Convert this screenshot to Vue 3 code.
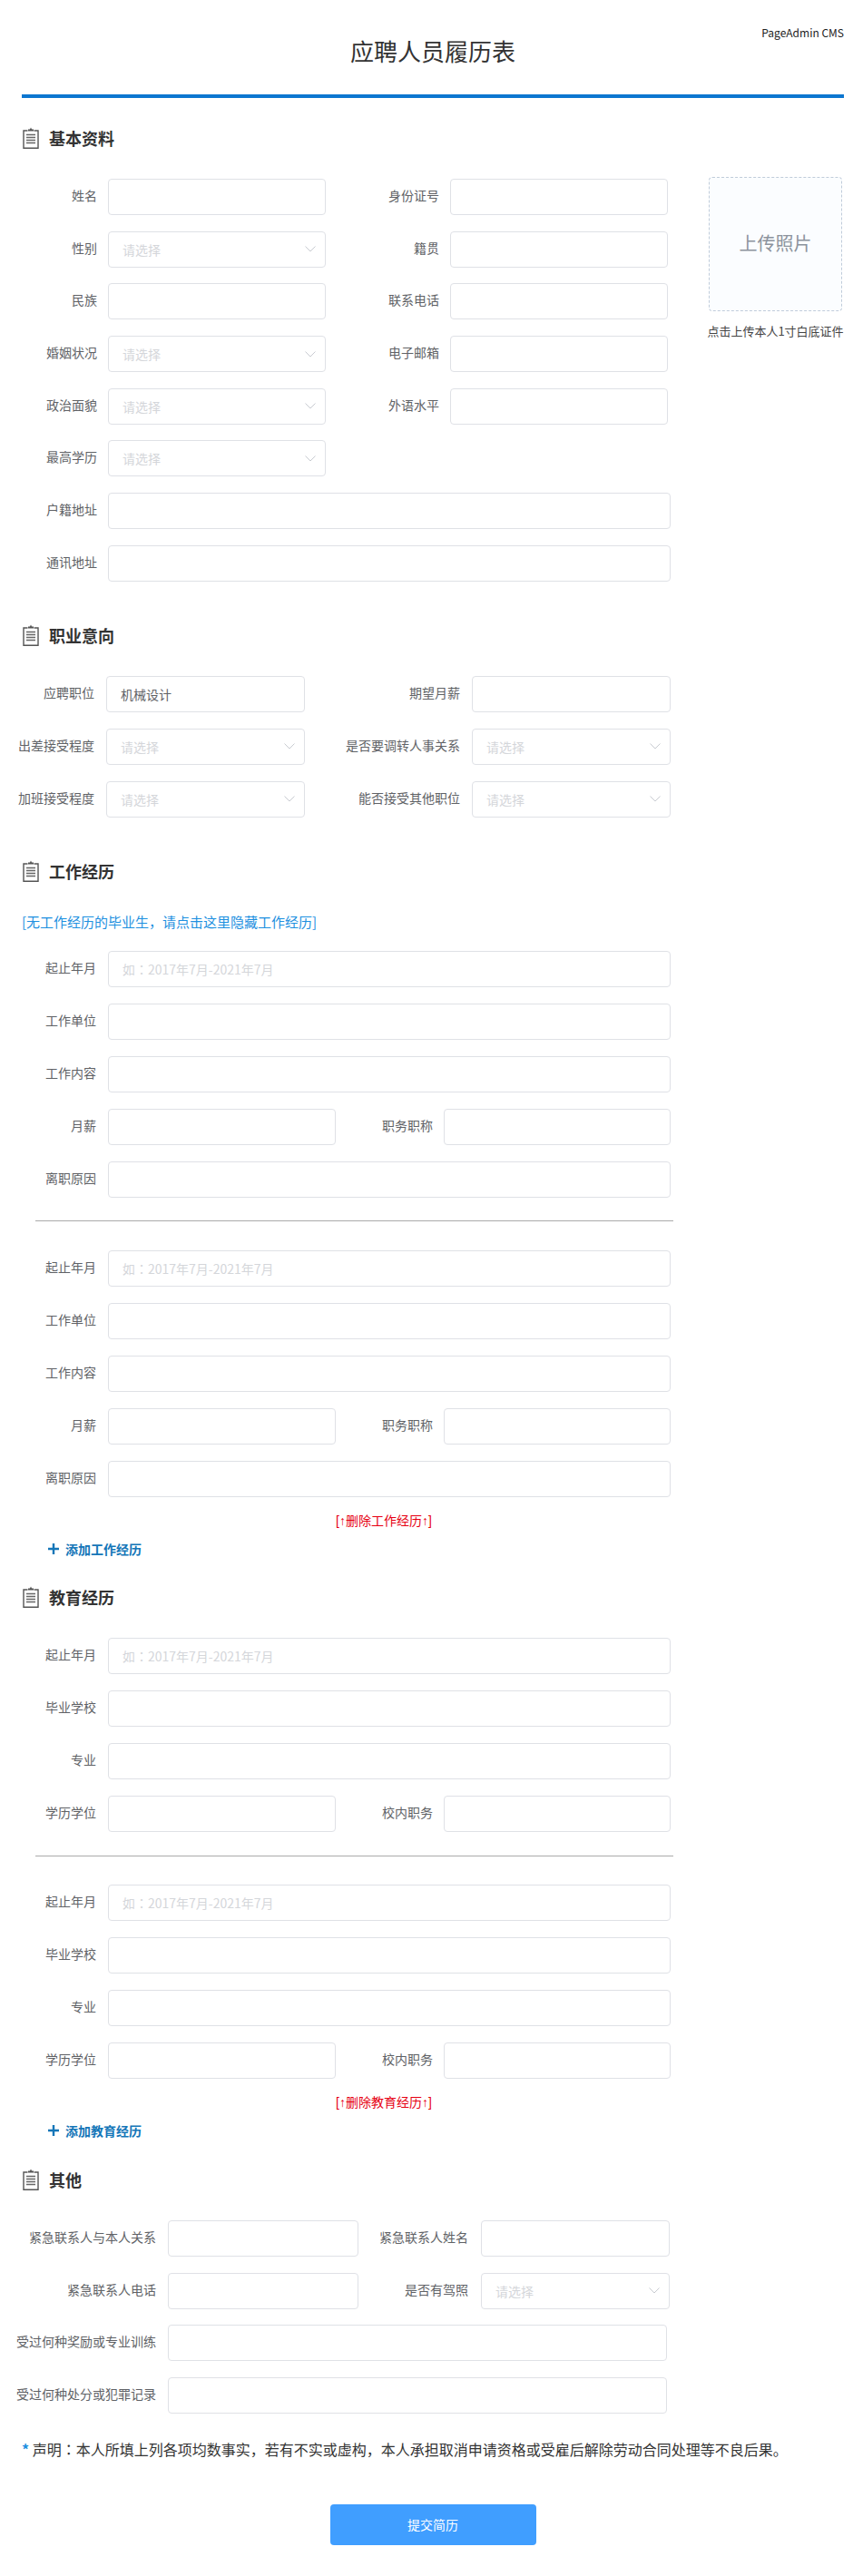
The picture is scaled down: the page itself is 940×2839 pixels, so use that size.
<script setup>
const sel = (l) => ({ l, select: true })
const inp = (l, extra = {}) => ({ l, ...extra })
const full = (l, extra = {}) => ({ l, full: true, ...extra })

const basicRows = [
  [inp('姓名'), inp('身份证号')],
  [sel('性别'), inp('籍贯')],
  [inp('民族'), inp('联系电话')],
  [sel('婚姻状况'), inp('电子邮箱')],
  [sel('政治面貌'), inp('外语水平')],
  [sel('最高学历')],
  [full('户籍地址')],
  [full('通讯地址')]
]
const jobRows = [
  [inp('应聘职位', { value: '机械设计' }), inp('期望月薪')],
  [sel('出差接受程度'), sel('是否要调转人事关系')],
  [sel('加班接受程度'), sel('能否接受其他职位')]
]
const dateHint = '如：2017年7月-2021年7月'
const workRows = [
  [full('起止年月', { ph: dateHint })],
  [full('工作单位')],
  [full('工作内容')],
  [inp('月薪'), inp('职务职称')],
  [full('离职原因')]
]
const eduRows = [
  [full('起止年月', { ph: dateHint })],
  [full('毕业学校')],
  [full('专业')],
  [inp('学历学位'), inp('校内职务')]
]
const otherRows = [
  [inp('紧急联系人与本人关系'), inp('紧急联系人姓名')],
  [inp('紧急联系人电话'), sel('是否有驾照')],
  [full('受过何种奖励或专业训练')],
  [full('受过何种处分或犯罪记录')]
]
</script>

<template>
  <div class="page">
    <header class="head">
      <span></span>
      <h1 class="title">应聘人员履历表</h1>
      <span class="brand">PageAdmin CMS</span>
    </header>

    <section class="sec first-sec">
      <h2 class="sec-title">
        <svg class="clip" viewBox="0 0 18 24" width="18" height="24" fill="none">
          <path d="M5.5 4H1v19.2h16V4h-4.5" stroke="#555" stroke-width="1.4" />
          <path d="M6 4.6V2.6h2L9 .6l1 2h2v2z" fill="#555" />
          <path d="M4 8.5h10M4 11.5h10M4 14.5h10M4 17.5h10" stroke="#666" stroke-width="1.4" />
        </svg>基本资料
      </h2>
      <div class="basic-wrap">
        <div class="rows basic">
          <div v-for="(row, r) in basicRows" :key="r" class="row">
            <div v-for="(f, i) in row" :key="f.l" class="field" :class="[i ? 'second' : 'first', { full: f.full }]">
              <label class="label">{{ f.l }}</label>
              <div v-if="f.select" class="control select">
                <span>请选择</span>
                <svg width="12" height="7" viewBox="0 0 12 7" fill="none"><path d="M.5.5 6 6 11.5.5" stroke="#c8cbd1" /></svg>
              </div>
              <input v-else class="control" type="text" :value="f.value" :placeholder="f.ph" />
            </div>
          </div>
        </div>
        <aside class="photo-box">
          <div class="photo">上传照片</div>
          <p class="photo-tip">点击上传本人1寸白底证件</p>
        </aside>
      </div>
    </section>

    <section class="sec">
      <h2 class="sec-title">
        <svg class="clip" viewBox="0 0 18 24" width="18" height="24" fill="none">
          <path d="M5.5 4H1v19.2h16V4h-4.5" stroke="#555" stroke-width="1.4" />
          <path d="M6 4.6V2.6h2L9 .6l1 2h2v2z" fill="#555" />
          <path d="M4 8.5h10M4 11.5h10M4 14.5h10M4 17.5h10" stroke="#666" stroke-width="1.4" />
        </svg>职业意向
      </h2>
      <div class="rows job">
        <div v-for="(row, r) in jobRows" :key="r" class="row">
          <div v-for="(f, i) in row" :key="f.l" class="field" :class="[i ? 'second' : 'first']">
            <label class="label">{{ f.l }}</label>
            <div v-if="f.select" class="control select">
              <span>请选择</span>
              <svg width="12" height="7" viewBox="0 0 12 7" fill="none"><path d="M.5.5 6 6 11.5.5" stroke="#c8cbd1" /></svg>
            </div>
            <input v-else class="control" type="text" :value="f.value" />
          </div>
        </div>
      </div>
    </section>

    <section class="sec">
      <h2 class="sec-title">
        <svg class="clip" viewBox="0 0 18 24" width="18" height="24" fill="none">
          <path d="M5.5 4H1v19.2h16V4h-4.5" stroke="#555" stroke-width="1.4" />
          <path d="M6 4.6V2.6h2L9 .6l1 2h2v2z" fill="#555" />
          <path d="M4 8.5h10M4 11.5h10M4 14.5h10M4 17.5h10" stroke="#666" stroke-width="1.4" />
        </svg>工作经历
      </h2>
      <p class="hide-link">[无工作经历的毕业生，请点击这里隐藏工作经历]</p>
      <div class="rows work">
        <div v-for="(row, r) in workRows" :key="r" class="row">
          <div v-for="(f, i) in row" :key="f.l" class="field" :class="[i ? 'second' : 'first', { full: f.full }]">
            <label class="label">{{ f.l }}</label>
            <input class="control" type="text" :placeholder="f.ph" />
          </div>
        </div>
      </div>
      <hr class="divider work-div" />
      <div class="rows work">
        <div v-for="(row, r) in workRows" :key="r" class="row">
          <div v-for="(f, i) in row" :key="f.l" class="field" :class="[i ? 'second' : 'first', { full: f.full }]">
            <label class="label">{{ f.l }}</label>
            <input class="control" type="text" :placeholder="f.ph" />
          </div>
        </div>
      </div>
      <p class="del-link">[↑删除工作经历↑]</p>
      <p class="add-link">
        <svg width="12" height="12" viewBox="0 0 12 12"><path d="M6 0v12M0 6h12" stroke="#1476b8" stroke-width="2.4" /></svg>添加工作经历
      </p>
    </section>

    <section class="sec tight">
      <h2 class="sec-title">
        <svg class="clip" viewBox="0 0 18 24" width="18" height="24" fill="none">
          <path d="M5.5 4H1v19.2h16V4h-4.5" stroke="#555" stroke-width="1.4" />
          <path d="M6 4.6V2.6h2L9 .6l1 2h2v2z" fill="#555" />
          <path d="M4 8.5h10M4 11.5h10M4 14.5h10M4 17.5h10" stroke="#666" stroke-width="1.4" />
        </svg>教育经历
      </h2>
      <div class="rows work">
        <div v-for="(row, r) in eduRows" :key="r" class="row">
          <div v-for="(f, i) in row" :key="f.l" class="field" :class="[i ? 'second' : 'first', { full: f.full }]">
            <label class="label">{{ f.l }}</label>
            <input class="control" type="text" :placeholder="f.ph" />
          </div>
        </div>
      </div>
      <hr class="divider edu-div" />
      <div class="rows work">
        <div v-for="(row, r) in eduRows" :key="r" class="row">
          <div v-for="(f, i) in row" :key="f.l" class="field" :class="[i ? 'second' : 'first', { full: f.full }]">
            <label class="label">{{ f.l }}</label>
            <input class="control" type="text" :placeholder="f.ph" />
          </div>
        </div>
      </div>
      <p class="del-link">[↑删除教育经历↑]</p>
      <p class="add-link">
        <svg width="12" height="12" viewBox="0 0 12 12"><path d="M6 0v12M0 6h12" stroke="#1476b8" stroke-width="2.4" /></svg>添加教育经历
      </p>
    </section>

    <section class="sec last-sec">
      <h2 class="sec-title">
        <svg class="clip" viewBox="0 0 18 24" width="18" height="24" fill="none">
          <path d="M5.5 4H1v19.2h16V4h-4.5" stroke="#555" stroke-width="1.4" />
          <path d="M6 4.6V2.6h2L9 .6l1 2h2v2z" fill="#555" />
          <path d="M4 8.5h10M4 11.5h10M4 14.5h10M4 17.5h10" stroke="#666" stroke-width="1.4" />
        </svg>其他
      </h2>
      <div class="rows other">
        <div v-for="(row, r) in otherRows" :key="r" class="row">
          <div v-for="(f, i) in row" :key="f.l" class="field" :class="[i ? 'second' : 'first', { full: f.full }]">
            <label class="label">{{ f.l }}</label>
            <div v-if="f.select" class="control select">
              <span>请选择</span>
              <svg width="12" height="7" viewBox="0 0 12 7" fill="none"><path d="M.5.5 6 6 11.5.5" stroke="#c8cbd1" /></svg>
            </div>
            <input v-else class="control" type="text" />
          </div>
        </div>
      </div>
    </section>

    <p class="statement"><span class="star">*</span> 声明<span class="tc">：</span>本人所填上列各项均数事实，若有不实或虚构，本人承担取消申请资格或受雇后解除劳动合同处理等不良后果。</p>

    <div class="actions">
      <button class="submit" type="button">提交简历</button>
    </div>
  </div>
</template>

<style>
html, body { margin: 0; background: #fff; }
</style>

<style scoped>
.page {
  box-sizing: border-box;
  width: 940px;
  height: 2839px;
  padding: 0 10px 0 24px;
  font-family: "Noto Sans CJK SC", "Noto Sans", sans-serif;
  font-size: 14px;
  color: #606266;
  overflow: hidden;
}
.head {
  display: grid;
  grid-template-columns: 1fr auto 1fr;
  height: 104px;
  border-bottom: 4px solid #0c76d0;
}
.title {
  margin: 36px 0 0;
  font-size: 26px;
  line-height: 40px;
  font-weight: 400;
  color: #333;
}
.brand {
  justify-self: end;
  margin-top: 27px;
  font-size: 12px;
  line-height: 18px;
  color: #222;
}
.sec { margin-top: 47px; }
.first-sec { margin-top: 32px; }
.sec.tight { margin-top: 30px; }
.sec.last-sec { margin-top: 31px; }
.sec-title {
  display: flex;
  align-items: center;
  gap: 11px;
  height: 24px;
  margin: 0 0 33px;
  font-size: 18px;
  line-height: 24px;
  font-weight: 700;
  color: #333;
}
.clip { flex: none; margin-left: 1px; }
.rows {
  display: flex;
  flex-direction: column;
  gap: 18px;
}
.row { display: flex; }
.field {
  display: flex;
  gap: var(--gap);
}
.label {
  display: flex;
  justify-content: flex-end;
  flex: none;
  width: var(--l1);
  line-height: 36px;
  white-space: nowrap;
}
.second .label { width: var(--l2); }
.control {
  box-sizing: border-box;
  flex: none;
  width: var(--w1);
  height: 40px;
  margin: 0;
  padding: 0 15px;
  border: 1px solid #dfe1e6;
  border-radius: 4px;
  background: #fff;
  font: inherit;
  color: #606266;
  outline: none;
}
.control::placeholder {
  color: #d4d6da;
  opacity: 1;
  font-family: "Noto Sans CJK TC", "Noto Sans", sans-serif;
}
.second .control { width: var(--w2); }
.full .control { width: var(--wf); }
.select {
  display: flex;
  align-items: center;
  justify-content: space-between;
  padding-right: 10px;
  color: #d4d6da;
}
.basic-wrap {
  display: flex;
  justify-content: space-between;
}
.basic {
  --gap: 12px;
  --l1: 83px;
  --l2: 125px;
  --w1: 240px;
  --w2: 240px;
  --wf: 620px;
  gap: 17.7px;
}
.photo-box {
  width: 151px;
  margin-top: -2px;
  text-align: center;
}
.photo {
  box-sizing: border-box;
  width: 147px;
  height: 148px;
  margin-left: 2px;
  border: 1px dashed #c0ccda;
  border-radius: 4px;
  background: #fbfdff;
  font-size: 20px;
  line-height: 144px;
  color: #8c939d;
}
.photo-tip {
  margin: 12px 0 0;
  font-size: 13px;
  line-height: 20px;
  color: #444;
  white-space: nowrap;
}
.job {
  --gap: 13px;
  --l1: 80px;
  --l2: 171px;
  --w1: 219px;
  --w2: 219px;
}
.work {
  --gap: 13px;
  --l1: 82px;
  --l2: 107px;
  --w1: 251px;
  --w2: 250px;
  --wf: 620px;
}
.work .second { gap: 12px; }
.other {
  --gap: 13px;
  --l1: 148px;
  --l2: 121px;
  --w1: 210px;
  --w2: 208px;
  --wf: 550px;
  gap: 17.7px;
}
.other .second { gap: 14px; }
.hide-link {
  margin: 0 0 21px;
  font-size: 15px;
  line-height: 22px;
  color: #1e90e0;
}
.divider {
  width: 703px;
  height: 0;
  border: 0;
  border-top: 1px solid #aaa;
  margin: 25px 0 32px 15px;
}
.edu-div { margin: 26px 0 31px 15px; }
.del-link {
  margin: 15px 0 0 346px;
  font-family: "Liberation Sans", "Noto Sans CJK SC", sans-serif;
  font-size: 14px;
  line-height: 22px;
  color: #e60012;
}
.add-link {
  display: flex;
  align-items: center;
  gap: 7px;
  margin: 9px 0 0 29px;
  font-size: 14px;
  line-height: 22px;
  font-weight: 700;
  color: #1476b8;
}
.statement {
  margin: 27px 0 0;
  font-size: 16px;
  line-height: 24px;
  color: #333;
  white-space: nowrap;
}
.tc { font-family: "Noto Sans CJK TC", sans-serif; }
.star { color: #1e90e0; font-weight: 700; }
.actions {
  display: flex;
  justify-content: center;
  margin-top: 49px;
}
.submit {
  width: 227px;
  height: 45px;
  border: 0;
  border-radius: 4px;
  background: #409eff;
  font: inherit;
  color: #fff;
}
</style>
